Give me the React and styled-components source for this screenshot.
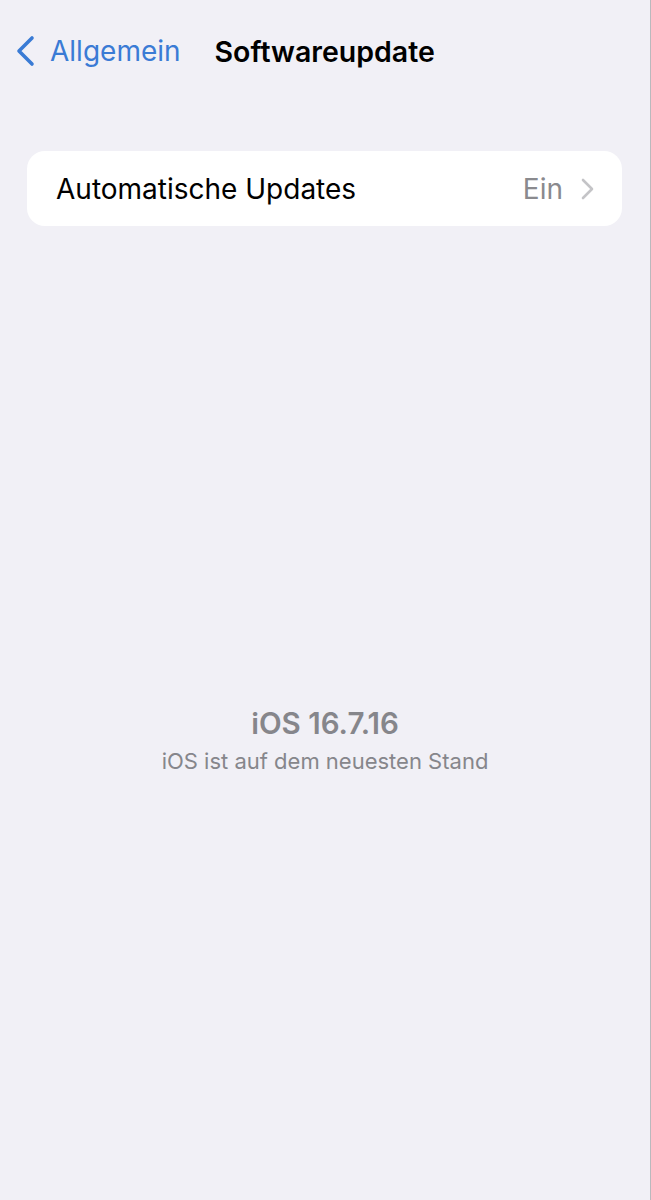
import React from "react";
import styled, { createGlobalStyle } from "styled-components";

const Global = createGlobalStyle`
  html, body { margin: 0; padding: 0; background: #f1f0f6; }
  * { box-sizing: border-box; }
`;

const Page = styled.div`
  width: 651px;
  min-height: 1200px;
  background: #f1f0f6;
  border-right: 1px solid #b9b9bd;
  font-family: Inter, "Noto Sans", sans-serif;
  display: flex;
  flex-direction: column;
`;

const NavBar = styled.div`
  display: flex;
  align-items: center;
  height: 102px;
  padding: 0 0 0 14px;
`;

const Back = styled.div`
  display: flex;
  align-items: center;
  gap: 14px;
  color: #3a7bd5;
  font-size: 28px;
`;

const Title = styled.div`
  margin-left: 34px;
  font-size: 28.5px;
  font-weight: 600;
  color: #000;
`;

const Card = styled.div`
  margin: 49px 28px 0 27px;
  height: 75px;
  background: #fff;
  border-radius: 18px;
  display: flex;
  align-items: center;
  padding: 0 28px 0 29px;
`;

const Label = styled.div`
  flex: 1;
  font-size: 28px;
  color: #000;
`;

const Value = styled.div`
  display: flex;
  align-items: center;
  gap: 18px;
  font-size: 28px;
  color: #8a8a8e;
`;

const Center = styled.div`
  margin-top: 479px;
  display: flex;
  flex-direction: column;
  align-items: center;
  color: #86868b;
`;

const Version = styled.div`
  font-size: 29.5px;
  font-weight: 600;
`;

const Status = styled.div`
  margin-top: 7px;
  font-size: 22px;
`;

export default function App() {
  return (
    <>
      <Global />
      <Page>
        <NavBar>
          <Back>
            <svg width="22" height="32" viewBox="0 0 22 32">
              <path d="M18 3 L5 16 L18 29" fill="none" stroke="#3a7bd5" strokeWidth="3.6" strokeLinecap="round" strokeLinejoin="round" />
            </svg>
            <span>Allgemein</span>
          </Back>
          <Title>Softwareupdate</Title>
        </NavBar>
        <Card>
          <Label>Automatische Updates</Label>
          <Value>
            <span>Ein</span>
            <svg width="13" height="22" viewBox="0 0 13 22">
              <path d="M2 2 L11 11 L2 20" fill="none" stroke="#c4c4c7" strokeWidth="2.6" strokeLinecap="round" strokeLinejoin="round" />
            </svg>
          </Value>
        </Card>
        <Center>
          <Version>iOS 16.7.16</Version>
          <Status>iOS ist auf dem neuesten Stand</Status>
        </Center>
      </Page>
    </>
  );
}
